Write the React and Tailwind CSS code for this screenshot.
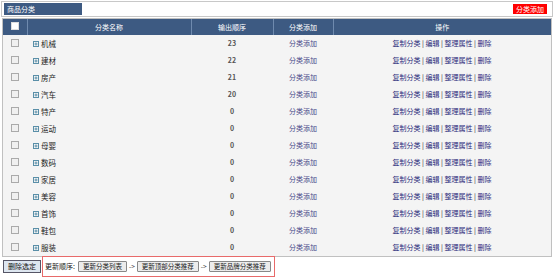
import React from 'react';

const rows = [
    { name: '机械', order: 23 },
    { name: '建材', order: 22 },
    { name: '房产', order: 21 },
    { name: '汽车', order: 20 },
    { name: '特产', order: 0 },
    { name: '运动', order: 0 },
    { name: '母婴', order: 0 },
    { name: '数码', order: 0 },
    { name: '家居', order: 0 },
    { name: '美容', order: 0 },
    { name: '首饰', order: 0 },
    { name: '鞋包', order: 0 },
    { name: '服装', order: 0 },
];

const TreeIcon = () => (
    <svg width="6" height="6" viewBox="0 0 6 6" className="inline-block mr-[2px] align-[0px]">
        <rect x="0.5" y="0.5" width="5" height="5" fill="none" stroke="#5a8fa8" />
        <path d="M1.5 3h3M3 1.5v3" stroke="#5a8fa8" />
    </svg>
);

const Box = ({ white }) => (
    <span className={`inline-block w-[8px] h-[8px] border ${white ? 'bg-white border-[#ddd]' : 'bg-[#f0f0f0] border-[#aaa]'}`} />
);

const Btn = ({ children }) => (
    <button className="h-[11px] px-[4px] border border-[#888] bg-[#ececec] text-[6.5px] leading-[9px] text-[#222] rounded-[1px]">
        {children}
    </button>
);

const App = () => {
    return (
        <div className="w-[554px] h-[277px] bg-white text-[8px] overflow-hidden" style={{ fontFamily: '"Noto Sans CJK SC", "Liberation Sans", sans-serif' }}>
            {/* Top bar */}
            <div className="mx-[1px] mt-[1px] h-[16px] border border-[#c8c8c8] flex items-center justify-between px-[2px]">
                <div className="w-[78px] h-[12px] bg-[#3d5a82] text-white text-[7px] leading-[12px] pl-[3px]">商品分类</div>
                <div className="h-[10px] bg-[#ff0000] text-white text-[7px] leading-[10px] px-[3px] mr-[3px]">分类添加</div>
            </div>

            {/* Table */}
            <div className="mx-[2px] mt-[1px] border border-[#c0c0c0] bg-[#f4f4f4]">
                <table className="w-full border-collapse table-fixed">
                    <colgroup>
                        <col className="w-[24px]" />
                        <col className="w-[164px]" />
                        <col className="w-[82px]" />
                        <col className="w-[60px]" />
                        <col />
                    </colgroup>
                    <thead>
                        <tr className="h-[16px] bg-[#3d5a82] text-white text-[7px]">
                            <th className="border-r border-[#6f8aae] font-normal"><Box white /></th>
                            <th className="border-r border-[#6f8aae] font-normal">分类名称</th>
                            <th className="border-r border-[#6f8aae] font-normal">输出顺序</th>
                            <th className="border-r border-[#6f8aae] font-normal">分类添加</th>
                            <th className="font-normal">操作</th>
                        </tr>
                    </thead>
                    <tbody>
                        {rows.map((r, i) => (
                            <tr key={i} className="h-[17px]">
                                <td className="text-center leading-none"><Box /></td>
                                <td className="pl-[6px] text-[#222] text-[7.5px]"><TreeIcon />{r.name}</td>
                                <td className="text-center font-bold text-[#555] text-[7px]">{r.order}</td>
                                <td className="text-center text-[#4a4a8a] text-[7px]">分类添加</td>
                                <td className="text-center text-[#2a2a7a] text-[7px]">
                                    复制分类 <span className="text-[#222]">|</span> 编辑 <span className="text-[#222]">|</span> 整理属性 <span className="text-[#222]">|</span> 删除
                                </td>
                            </tr>
                        ))}
                    </tbody>
                </table>
            </div>

            {/* Bottom actions */}
            <div className="flex items-center -mt-[1px] ml-[3px]">
                <button className="h-[13px] w-[38px] border border-[#556] bg-[#dde6f0] text-[7px] leading-[11px] text-[#111]">删除选定</button>
                <div className="ml-[1px] h-[21px] border border-[#e86a6a] flex items-center gap-[2px] pl-[2px] pr-[3px]">
                    <span className="text-[7px] text-[#222] mr-[1px]">更新顺序:</span>
                    <Btn>更新分类列表</Btn>
                    <span className="text-[6.5px] text-[#333]">-&gt;</span>
                    <Btn>更新顶部分类推荐</Btn>
                    <span className="text-[6.5px] text-[#333]">-&gt;</span>
                    <Btn>更新品牌分类推荐</Btn>
                </div>
            </div>
        </div>
    );
};

export default App;
